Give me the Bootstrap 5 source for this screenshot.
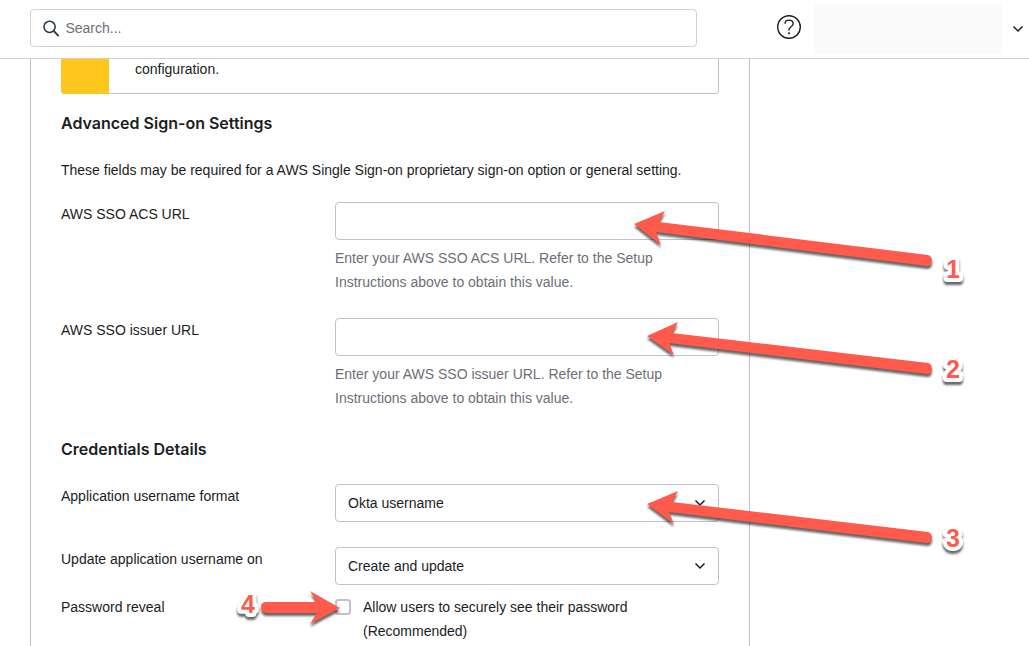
<!DOCTYPE html>
<html lang="en">
<head>
<meta charset="utf-8">
<meta name="viewport" content="width=device-width, initial-scale=1">
<title>Sign-on settings</title>
<link href="https://cdn.jsdelivr.net/npm/bootstrap@5.3.0/dist/css/bootstrap.min.css" rel="stylesheet">
<style>
  body { font-family: "Liberation Sans", Arial, sans-serif; font-size: 14px; line-height: 24px; color: #1d1d21; background: #fff; overflow-x: hidden; }
  .topbar { height: 59px; padding-left: 30px; border-bottom: 1px solid #d0d0d6; background: #fff; }
  .search-box { flex: 0 1 667px; height: 38px; margin-top: 9px; padding: 0 12px; gap: 6px; border: 1px solid #d0d0d5; border-radius: 4px; }
  .search-box input { font-size: 14px; line-height: 24px; outline: 0; }
  .search-box input::placeholder { color: #6e6e78; opacity: 1; }
  .help-btn { margin: 14px 12px 0 79px; }
  .account-btn { margin-top: 4px; }
  .account-name { width: 188px; height: 50px; background: #fafafa; }
  .account-btn svg { margin-left: 10px; }
  .panel { width: 100%; max-width: 720px; margin-left: 30px; padding: 0 30px 3px; border: solid #c1c1c8; border-width: 0 1px; }
  .callout { height: 35px; border: solid #c1c1c8; border-width: 0 1px 1px 0; border-radius: 0 0 4px 4px; line-height: 20px; }
  .callout-bar { width: 48px; margin-bottom: -1px; background: #ffc61e; border-radius: 0 0 0 4px; }
  .callout p { padding-left: 26px; }
  h2 { font-family: Inter, "Liberation Sans", sans-serif; font-size: 16px; line-height: 24px; font-weight: 600; margin: 0; }
  .head-first { margin: 17px 0 23px; }
  .head-next { margin: 27px 0 23px; }
  .setting { display: grid; grid-template-columns: 274px minmax(0, 1fr); }
  .control { position: relative; }
  .form-control, .form-select { height: 38px; padding: 6px 12px; border: 1px solid #c1c1c8; border-radius: 4px; font-size: 14px; line-height: 24px; color: #1d1d21; }
  .form-select { background-image: url("data:image/svg+xml,%3csvg xmlns='http://www.w3.org/2000/svg' viewBox='0 0 12 12'%3e%3cpath fill='none' stroke='%231d1d21' stroke-width='1.5' d='M1.5 3.5 6 8l4.500-4.500'/%3e%3c/svg%3e"); background-size: 12px 12px; background-position: right 12px center; }
  .hint { color: #6e6e78; margin-top: 6px; }
  .tick { flex: none; width: 16px; height: 16px; margin: 4px 12px 0 0; border: 2px solid #c1c1c8; border-radius: 4px; }
  .gap-first { margin-top: 20px; }
  .gap-field { margin-top: 24px; }
  .gap-select { margin-top: 25px; }
  .gap-tick { margin-top: 10px; }
  /* Callout arrows start at the corner of the control that they point to */
  .pointer { position: absolute; left: 0; top: 0; overflow: visible; pointer-events: none; z-index: 2; }
  .pointer path { fill: #ff5a4b; filter: drop-shadow(0 3px 1px rgba(0,0,0,.6)); }
  .pointer text { font: 700 25px "Liberation Sans", Arial, sans-serif; fill: #ff5a4b; stroke: #fff; stroke-width: 8px; stroke-linejoin: round; paint-order: stroke; text-anchor: middle; filter: drop-shadow(0 3px 1px rgba(0,0,0,.6)); }
</style>
</head>
<body class="d-flex flex-column min-vh-100">
<header class="topbar d-flex align-items-start">
  <label class="search-box d-flex align-items-center">
    <svg width="17" height="17" viewBox="0 0 17 17" fill="none" stroke="#263746" stroke-width="1.600" aria-hidden="true"><circle cx="6.800" cy="6.800" r="5.800"/><path stroke-width="2" d="m11 11 5.300 5.300"/></svg>
    <input type="search" class="border-0 p-0 w-100 bg-transparent" placeholder="Search..." aria-label="Search">
  </label>
  <button type="button" class="help-btn btn border-0 p-0 lh-1" aria-label="Help">
    <svg class="d-block" width="26" height="26" viewBox="0 0 26 26" fill="none" stroke="#1d1d21" stroke-width="1.400"><circle cx="13" cy="13" r="11.300"/><path d="M9 9.800C9 7.500 10.500 6.100 13 6.100s4.200 1.400 4.200 3.600c0 3-4.200 3-4.200 5.800v1"/><path stroke-width="1.600" d="M13 18.300v2"/></svg>
  </button>
  <button type="button" class="account-btn btn border-0 p-0 d-flex align-items-center rounded-0" aria-label="Account">
    <span class="account-name"></span>
    <svg width="12" height="12" viewBox="0 0 12 12" fill="none" stroke="#1d1d21" stroke-width="1.500"><path d="M1.500 3.500 6 8l4.500-4.500"/></svg>
  </button>
</header>
<main class="panel flex-grow-1">
  <div class="callout d-flex">
    <div class="callout-bar"></div>
    <p class="mb-0">configuration.</p>
  </div>

  <h2 class="head-first">Advanced Sign-on Settings</h2>
  <p class="mb-0">These fields may be required for a AWS Single Sign-on proprietary sign-on option or general setting.</p>

  <div class="setting gap-first">
    <label for="acs">AWS SSO ACS URL</label>
    <div class="control">
      <input id="acs" type="text" class="form-control" aria-describedby="acs-hint">
      <div id="acs-hint" class="hint">Enter your AWS SSO ACS URL. Refer to the Setup<br>Instructions above to obtain this value.</div>
      <svg class="pointer" width="1" height="1"><path d="M299 22 330 9 324 20 593 53Q597 54 597 59T592 64L321 30 326 43Z"/><text x="618" y="76">1</text></svg>
    </div>
  </div>
  <div class="setting gap-field">
    <label for="issuer">AWS SSO issuer URL</label>
    <div class="control">
      <input id="issuer" type="text" class="form-control" aria-describedby="issuer-hint">
      <div id="issuer-hint" class="hint">Enter your AWS SSO issuer URL. Refer to the Setup<br>Instructions above to obtain this value.</div>
      <svg class="pointer" width="1" height="1"><path d="M312 18 343 4 337 15 593 45Q597 46 597 51T592 56L334 25 339 37Z"/><text x="618" y="60">2</text></svg>
    </div>
  </div>

  <h2 class="head-next">Credentials Details</h2>
  <div class="setting">
    <label for="format">Application username format</label>
    <div class="control">
      <select id="format" class="form-select"><option>Okta username</option></select>
      <svg class="pointer" width="1" height="1"><path d="M312 20 343 7 337 18 593 48Q597 49 597 54T592 59L334 28 339 40Z"/><text x="618" y="63">3</text></svg>
    </div>
  </div>
  <div class="setting gap-select">
    <label for="update">Update application username on</label>
    <div class="control">
      <select id="update" class="form-select"><option>Create and update</option></select>
    </div>
  </div>
  <div class="setting gap-tick">
    <span>Password reveal</span>
    <div class="control d-flex">
      <input id="reveal" type="checkbox" class="form-check-input tick">
      <label for="reveal">Allow users to securely see their password<br>(Recommended)</label>
      <svg class="pointer" width="1" height="1"><path d="M5 13-25-4-18 7H-69Q-74 7-74 12T-69 18H-18L-25 29Z"/><text x="-87" y="18">4</text></svg>
    </div>
  </div>
</main>
<script src="https://cdn.jsdelivr.net/npm/bootstrap@5.3.0/dist/js/bootstrap.bundle.min.js"></script>
</body>
</html>
